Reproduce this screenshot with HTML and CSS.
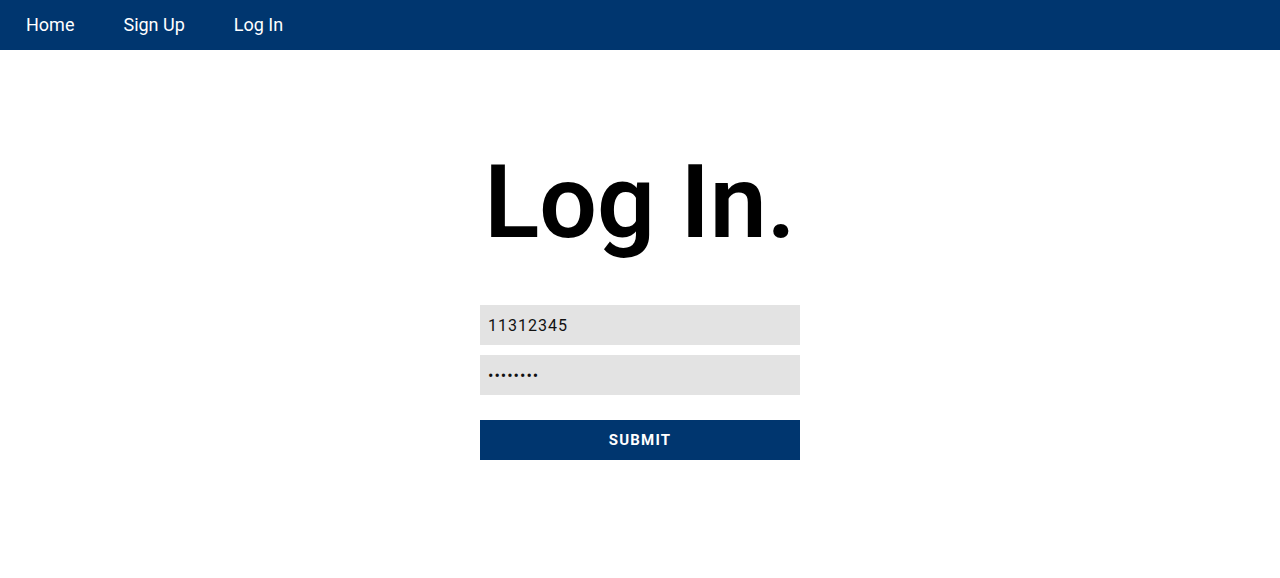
FILE: index.html
```html
<!DOCTYPE html>
<html>
<head>
<meta charset="utf-8">
<link rel="stylesheet" href="styles.css">
</head>
<body>
<nav class="nav">
  <a class="nav-link" href="#">Home</a>
  <a class="nav-link" href="#">Sign Up</a>
  <a class="nav-link" href="#">Log In</a>
</nav>
<main class="main">
  <h1 class="title">Log In.</h1>
  <form class="form">
    <input class="field" type="text" value="11312345">
    <input class="field" type="password" value="12345678">
    <button class="submit" type="button">SUBMIT</button>
  </form>
</main>
</body>
</html>
```

FILE: styles.css
```css
* { box-sizing: border-box; }
html, body { margin: 0; padding: 0; background: #fff; font-family: Roboto, "Liberation Sans", sans-serif; }
.nav {
  height: 50px;
  background: #00366f;
  display: flex;
  align-items: center;
  padding-left: 26px;
  gap: 49px;
}
.nav-link {
  color: #fff;
  text-decoration: none;
  font-size: 18px;
  line-height: 50px;
}
.main {
  display: flex;
  flex-direction: column;
  align-items: center;
}
.title {
  margin: 0;
  margin-top: 92px;
  font-size: 102px;
  font-weight: 600;
  line-height: 120px;
  color: #000;
}
.form {
  width: 320px;
  margin-top: 43px;
  display: flex;
  flex-direction: column;
}
.field {
  height: 40px;
  border: none;
  outline: none;
  background: #e3e3e3;
  font-family: Roboto, sans-serif;
  font-size: 16px;
  letter-spacing: 1px;
  color: #111;
  padding: 0 8px;
  margin: 0 0 10px 0;
}
.submit {
  margin-top: 15px;
  height: 40px;
  border: none;
  background: #00366f;
  color: #fff;
  font-family: Roboto, sans-serif;
  font-weight: 700;
  font-size: 15px;
  letter-spacing: 1.2px;
}
```
